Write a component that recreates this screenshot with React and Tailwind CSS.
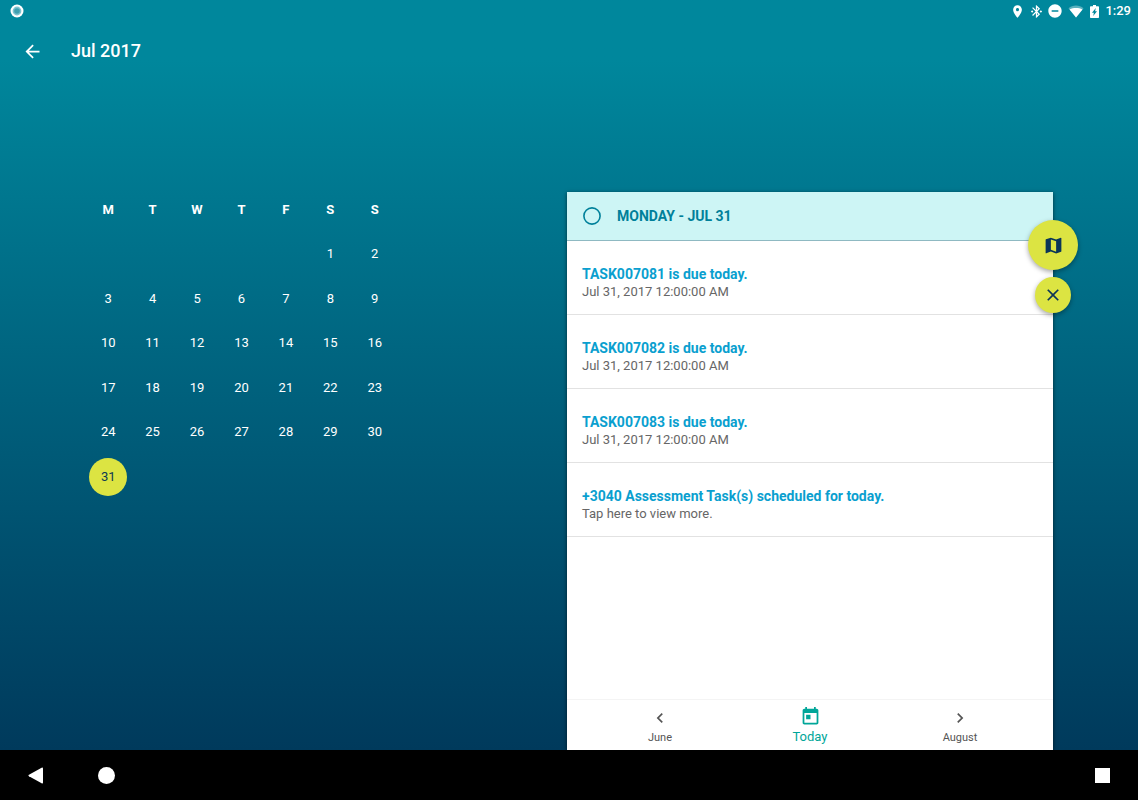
import React from "react";

const PATHS = {
  back: "M20 11H7.83l5.59-5.59L12 4l-8 8 8 8 1.41-1.41L7.83 13H20v-2z",
  place: "M12 2C8.13 2 5 5.13 5 9c0 5.25 7 13 7 13s7-7.75 7-13c0-3.87-3.13-7-7-7zm0 9.5c-1.38 0-2.5-1.12-2.5-2.5s1.12-2.5 2.5-2.5 2.5 1.12 2.5 2.5-1.12 2.5-2.5 2.5z",
  bluetooth: "M7 12l-2-2-2 2 2 2 2-2zm10.71-4.29L12 2h-1v7.59L6.41 5 5 6.41 10.59 12 5 17.59 6.41 19 11 14.41V22h1l5.71-5.71-4.3-4.29 4.3-4.29zM13 5.83l1.88 1.88L13 9.59V5.83zm1.88 10.46L13 18.17v-3.76l1.88 1.88zM19 10l-2 2 2 2 2-2-2-2z",
  disturb: "M12 2C6.48 2 2 6.48 2 12s4.48 10 10 10 10-4.48 10-10S17.52 2 12 2zm5 11H7v-2h10v2z",
  map: "M20.5 3l-.16.03L15 5.1 9 3 3.36 4.9c-.21.07-.36.25-.36.48V20.5c0 .28.22.5.5.5l.16-.03L9 18.9l6 2.1 5.64-1.9c.21-.07.36-.25.36-.48V3.5c0-.28-.22-.5-.5-.5zM15 19l-6-2.11V5l6 2.11V19z",
  close: "M19 6.41L17.59 5 12 10.59 6.41 5 5 6.41 10.59 12 5 17.59 6.41 19 12 13.41 17.59 19 19 17.59 13.41 12z",
  left: "M15.41 7.41L14 6l-6 6 6 6 1.41-1.41L10.83 12z",
  right: "M10 6L8.59 7.41 13.17 12l-4.58 4.59L10 18l6-6z",
  calendar: "M19 3h-1V1h-2v2H8V1H6v2H5c-1.11 0-1.99.9-1.99 2L3 19c0 1.1.89 2 2 2h14c1.1 0 2-.9 2-2V5c0-1.1-.9-2-2-2zm0 16H5V8h14v11zM7 10h5v5H7z",
};

function Icon({ name, className }) {
  return (
    <svg viewBox="0 0 24 24" className={className} fill="currentColor" aria-hidden="true">
      <path d={PATHS[name]} />
    </svg>
  );
}

function StatusBar() {
  return (
    <div className="flex h-[22px] items-center justify-between pl-[10px] pr-[7px] text-white">
      <svg viewBox="0 0 14 14" className="size-[14px]" aria-hidden="true">
        <circle cx="7" cy="7" r="6.5" fill="#fff" />
        <circle cx="7" cy="7" r="4.4" fill="#7fc3cf" />
        <circle cx="7" cy="7" r="2.8" fill="#3f9fb0" />
      </svg>
      <div className="flex items-center">
        <Icon name="place" className="mr-1 size-[15px]" />
        <Icon name="bluetooth" className="mr-[3px] size-[15px]" />
        <Icon name="disturb" className="mr-[5px] size-[16px]" />
        <svg viewBox="0 0 16 14" className="mr-[6px] h-[14px] w-[16px]" aria-hidden="true">
          <path d="M8 13.500L0.500 4.200C2.600 2.500 5.200 1.600 8 1.600s5.400.9 7.500 2.600z" fill="#fff" fillOpacity="0.35" />
          <path d="M8 13.500L1.500 5.500C3.500 4.600 5.800 4.100 8 4.100s4.500.5 6.500 1.400z" fill="#fff" />
        </svg>
        <svg viewBox="0 0 9 13" className="mr-[6px] h-[13px] w-[9px]" aria-hidden="true">
          <path
            fill="currentColor"
            fillRule="evenodd"
            d="M3 0h3v1.200h2.200q.8 0 .8.8v10.200q0 .8-.8.8H.8q-.8 0-.8-.8V2q0-.8.8-.8H3zM5.800 3L2 7.700h1.900L3.200 11 7 6.300H5.100z"
          />
        </svg>
        <span className="text-[13px] leading-4 font-medium">1:29</span>
      </div>
    </div>
  );
}

const DAY_NAMES = [
  ["M", "Monday"],
  ["T", "Tuesday"],
  ["W", "Wednesday"],
  ["T", "Thursday"],
  ["F", "Friday"],
  ["S", "Saturday"],
  ["S", "Sunday"],
];

const WEEKS = [0, 1, 2, 3, 4, 5].map((w) =>
  [0, 1, 2, 3, 4, 5, 6].map((d) => {
    const date = w * 7 + d - 4;
    return date >= 1 && date <= 31 ? date : null;
  })
);

function Calendar({ selected }) {
  return (
    <table className="h-[311px] w-[311px] table-fixed text-center text-[13px] leading-4 text-white">
      <thead>
        <tr className="h-[44px]">
          {DAY_NAMES.map(([letter, name]) => (
            <th key={name} abbr={name} scope="col" className="p-0 font-bold">{letter}</th>
          ))}
        </tr>
      </thead>
      <tbody>
        {WEEKS.map((week, w) => (
          <tr key={w} className="h-[44px]">
            {week.map((date, d) => (
              <td key={d} className="p-0">
                {date && (
                  <button
                    type="button"
                    className={
                      date === selected
                        ? "size-[38px] rounded-full bg-[#dce442] align-middle text-[#0d3a52]"
                        : "size-[38px] rounded-full align-middle"
                    }
                  >
                    {date}
                  </button>
                )}
              </td>
            ))}
          </tr>
        ))}
      </tbody>
    </table>
  );
}

const TASKS = [
  ["TASK007081 is due today.", "Jul 31, 2017 12:00:00 AM"],
  ["TASK007082 is due today.", "Jul 31, 2017 12:00:00 AM"],
  ["TASK007083 is due today.", "Jul 31, 2017 12:00:00 AM"],
  ["+3040 Assessment Task(s) scheduled for today.", "Tap here to view more."],
];

function DayPanel() {
  return (
    <section className="relative flex flex-col bg-white shadow-[0_1px_4px_rgba(0,0,0,0.6)]">
      <header className="flex h-[49px] items-center border-b border-[#8fb9c2] bg-[#cdf5f5] pl-[16px] text-[#00809a]">
        <svg viewBox="0 0 18 18" className="mr-[16px] size-[18px]" aria-hidden="true">
          <circle cx="9" cy="9" r="8.1" fill="none" stroke="currentColor" strokeWidth="1.6" />
        </svg>
        <h2 className="text-[14px] leading-5 font-bold">MONDAY - JUL 31</h2>
      </header>
      <ul className="flex-1">
        {TASKS.map(([title, detail]) => (
          <li key={title} className="border-b border-[#e2e2e2]">
            <a href="#" className="block px-[15px] pt-[23px] pb-[14px]">
              <span className="block text-[14px] leading-5 font-bold text-[#0a9fcf]">{title}</span>
              <span className="block text-[13px] leading-4 text-[#666666]">{detail}</span>
            </a>
          </li>
        ))}
      </ul>
      <nav className="grid h-[51px] grid-cols-3 border-t border-[#f4f4f4] px-[18px] text-[#555555]">
        <button type="button" className="flex flex-col items-center pt-2">
          <Icon name="left" className="size-[20px]" />
          <span className="mt-[2px] text-[11px] leading-4">June</span>
        </button>
        <button type="button" className="flex flex-col items-center pt-[6px] text-[#00a699]">
          <Icon name="calendar" className="size-[21px]" />
          <span className="mt-[2px] text-[13px] leading-4">Today</span>
        </button>
        <button type="button" className="flex flex-col items-center pt-2">
          <Icon name="right" className="size-[20px]" />
          <span className="mt-[2px] text-[11px] leading-4">August</span>
        </button>
      </nav>
      <div className="absolute top-[28px] right-0 flex translate-x-1/2 flex-col items-center gap-[7px] text-[#0a3558]">
        <button type="button" aria-label="Map" className="flex size-[50px] items-center justify-center rounded-full bg-[#dce442] shadow-[0_2px_5px_rgba(0,0,0,0.35)]">
          <Icon name="map" className="size-[21px]" />
        </button>
        <button type="button" aria-label="Close" className="flex size-[36px] items-center justify-center rounded-full bg-[#dce442] shadow-[0_2px_5px_rgba(0,0,0,0.35)]">
          <Icon name="close" className="size-[20px]" />
        </button>
      </div>
    </section>
  );
}

function SystemNav() {
  return (
    <nav className="flex h-[50px] items-center bg-black px-[28px] text-white">
      <button type="button" aria-label="Back">
        <svg viewBox="0 0 16 17" className="h-[17px] w-[16px]" fill="currentColor">
          <path d="M13.600.8Q15 .2 15 1.500V15.500Q15 16.800 13.600 16.200L1 9.200Q-.2 8.500 1 7.800z" />
        </svg>
      </button>
      <button type="button" aria-label="Home" className="ml-[54px] size-[17px] rounded-full bg-white" />
      <button type="button" aria-label="Recent apps" className="ml-auto size-[15px] bg-white" />
    </nav>
  );
}

export default function App() {
  return (
    <div className="flex min-h-screen flex-col overflow-x-hidden bg-black font-['Roboto',sans-serif]">
      <div className="flex flex-1 flex-col bg-linear-to-b from-[#00879c] from-8% to-[#003a5c]">
        <StatusBar />
        <header className="flex h-[58px] items-center pl-[22px] text-white">
          <a href="#" aria-label="Back">
            <Icon name="back" className="size-[21px]" />
          </a>
          <h1 className="ml-[28px] text-[18px] leading-6 font-medium">Jul 2017</h1>
        </header>
        <main className="grid flex-1 grid-cols-[minmax(396px,567fr)_486fr] pt-[112px] pr-[85px]">
          <div className="-mt-1 pl-[86px]">
            <Calendar selected={31} />
          </div>
          <DayPanel />
        </main>
      </div>
      <SystemNav />
    </div>
  );
}
